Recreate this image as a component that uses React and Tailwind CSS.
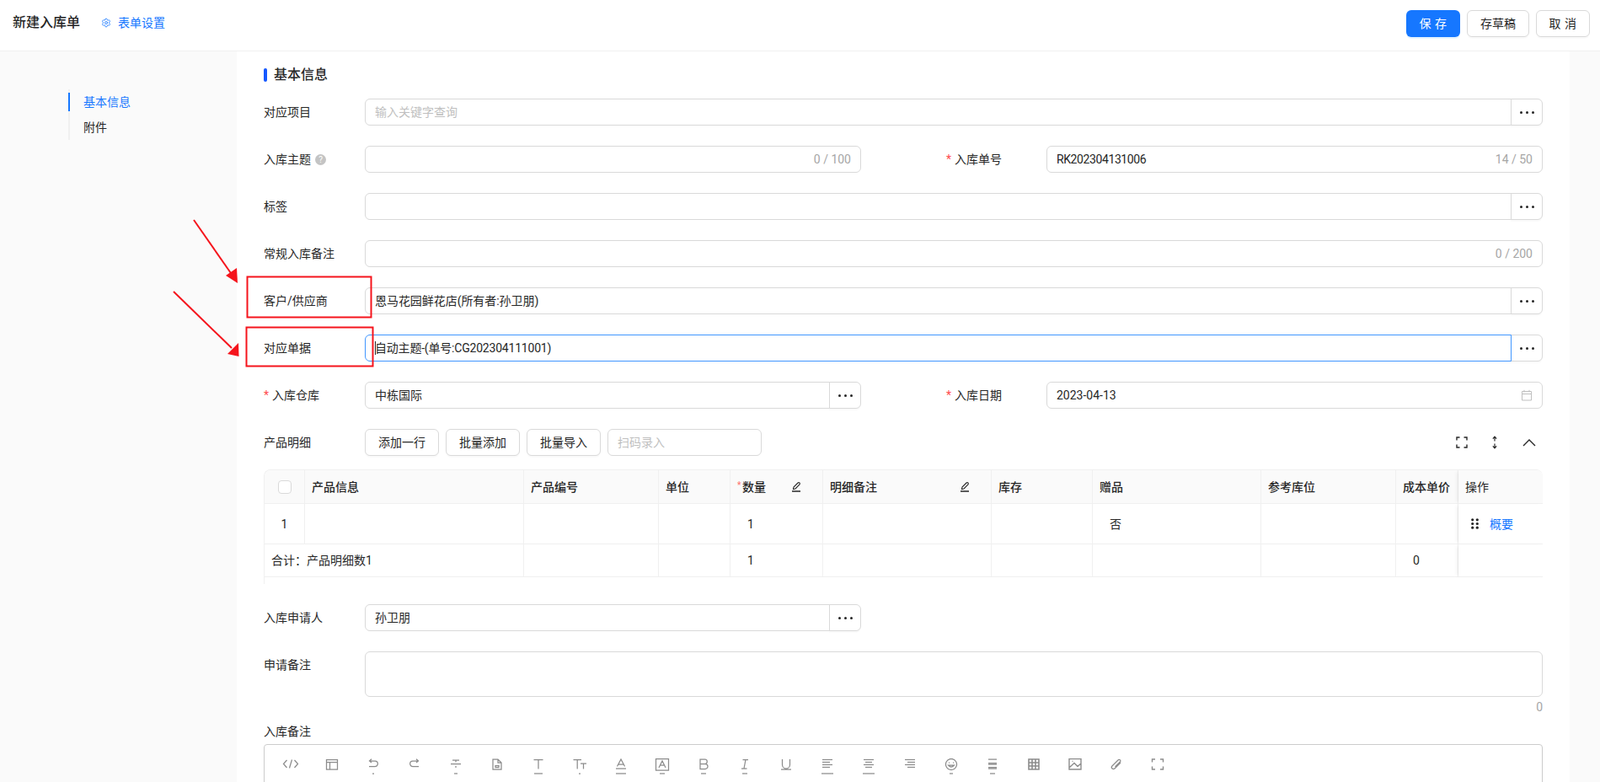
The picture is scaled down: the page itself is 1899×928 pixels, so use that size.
import React from "react";
import { Settings } from "lucide-react";

const inputBox = "h-8 border border-[#d9d9d9] rounded-md bg-white";

function Dots() {
  return (
    <span className="flex gap-1">
      <i className="w-[3px] h-[3px] bg-[#262626] rounded-full" />
      <i className="w-[3px] h-[3px] bg-[#262626] rounded-full" />
      <i className="w-[3px] h-[3px] bg-[#262626] rounded-full" />
    </span>
  );
}

function Label({ children, required, className = "" }) {
  return (
    <label className={`w-[120px] shrink-0 flex text-sm text-[#262626] ${className || "items-center"}`}>
      {required && <span className="text-[#ff4d4f] mr-[5px] w-[5px]">*</span>}
      {children}
    </label>
  );
}

function TextInput({ value, placeholder, count, inputClass = "" }) {
  return (
    <div className={`${inputBox} flex-1 min-w-0 flex items-center px-[11px]`}>
      <input
        readOnly
        value={value || ""}
        placeholder={placeholder}
        className={`flex-1 min-w-0 text-sm text-[#262626] outline-none placeholder:text-[#bfbfbf] ${inputClass}`}
      />
      {count && <span className="text-sm text-[#a6a6a6] ml-2">{count}</span>}
    </div>
  );
}

// input with the "..." picker button stuck on the right
function PickerInput({ value, placeholder, focused, inputClass = "" }) {
  return (
    <div className="flex flex-1 min-w-0">
      <div
        className={`relative flex-1 min-w-0 h-8 flex items-center px-[11px] border rounded-l-md ${
          focused ? "border-[#4096ff]" : "border-[#d9d9d9]"
        }`}
      >
        <input
          readOnly
          value={value || ""}
          placeholder={placeholder}
          className={`w-full text-sm text-[#262626] outline-none placeholder:text-[#bfbfbf] ${inputClass}`}
        />
        {focused && <i className="absolute left-[11px] top-[7px] w-px h-4 bg-[#262626]" />}
      </div>
      <button className="w-[38px] h-8 -ml-px flex items-center justify-center border border-[#d9d9d9] rounded-r-md bg-white shadow-[0_2px_0_rgba(0,0,0,0.02)]">
        <Dots />
      </button>
    </div>
  );
}

function Pencil() {
  return (
    <svg width="16" height="16" viewBox="0 0 16 16" fill="none" stroke="#262626" strokeWidth="1.1">
      <path d="M4.5 10.5 L5 8 L10 3 Q11 2.3 12 3 Q12.8 4 12 5 L7 10 Z" />
      <path d="M3 13 H13" strokeWidth="1.3" />
    </svg>
  );
}

function Toolbar() {
  return (
    <div className="flex items-center h-8 mb-4">
      <Label>产品明细</Label>
      <div className="flex gap-2 items-center">
        {["添加一行", "批量添加", "批量导入"].map((t) => (
          <button
            key={t}
            className="w-[88px] h-8 text-sm text-[#262626] border border-[#d9d9d9] rounded-md bg-white shadow-[0_2px_0_rgba(0,0,0,0.02)]"
          >
            {t}
          </button>
        ))}
        <div className={`${inputBox} w-[183px] flex items-center px-[11px]`}>
          <input placeholder="扫码录入" readOnly className="w-full text-sm outline-none placeholder:text-[#bfbfbf]" />
        </div>
      </div>
      <div className="ml-auto flex items-center text-[#262626]">
        <svg width="14" height="14" viewBox="0 0 14 14" fill="none" stroke="currentColor" strokeWidth="1.4">
          <path d="M1 4.5 V1 H4.5 M9.5 1 H13 V4.5 M13 9.5 V13 H9.5 M4.5 13 H1 V9.5" />
        </svg>
        <svg className="ml-[25px]" width="14" height="16" viewBox="0 0 14 16" fill="none" stroke="currentColor" strokeWidth="1.2">
          <path d="M7 1.5 V6.5 M4.8 3.6 L7 1.2 L9.2 3.6 M7 9.5 V14.5 M4.8 12.4 L7 14.8 L9.2 12.4" />
        </svg>
        <svg className="ml-[26px] mr-2" width="16" height="9" viewBox="0 0 16 9" fill="none" stroke="currentColor" strokeWidth="1.4">
          <path d="M1 8 L8 1 L15 8" />
        </svg>
      </div>
    </div>
  );
}

const th = "h-10 px-2 text-left text-sm font-medium text-[#262626] bg-[#fafafa] border-r border-b border-[#f0f0f0]";
const td = "px-[20px] text-sm text-[#262626] border-r border-b border-[#f0f0f0]";
const fixedCol = "shadow-[-4px_0_4px_-2px_rgba(0,0,0,0.06)]";

function DetailTable() {
  return (
    <div className="h-[136px] mb-6 border-l border-t border-[#f0f0f0] rounded-t-lg overflow-hidden">
      <table className="table-fixed w-[1517px] border-separate border-spacing-0">
        <colgroup>
          <col className="w-[48px]" />
          <col className="w-[260px]" />
          <col className="w-[160px]" />
          <col className="w-[85px]" />
          <col className="w-[110px]" />
          <col className="w-[200px]" />
          <col className="w-[120px]" />
          <col className="w-[200px]" />
          <col className="w-[160px]" />
          <col className="w-[74px]" />
          <col className="w-[100px]" />
        </colgroup>
        <thead>
          <tr>
            <th className={th}>
              <span className="block w-4 h-4 mx-auto border border-[#d9d9d9] rounded bg-white" />
            </th>
            <th className={th}>产品信息</th>
            <th className={th}>产品编号</th>
            <th className={th}>单位</th>
            <th className={th}>
              <div className="flex items-center justify-between pr-[15px]">
                <span className="relative">
                  <span className="absolute left-0 top-[1px] text-[10px] text-[#ff7875]">*</span>
                  <span className="pl-[6px]">数量</span>
                </span>
                <Pencil />
              </div>
            </th>
            <th className={th}>
              <div className="flex items-center justify-between pr-[15px]">
                明细备注
                <Pencil />
              </div>
            </th>
            <th className={th}>库存</th>
            <th className={th}>赠品</th>
            <th className={th}>参考库位</th>
            <th className={`${th} whitespace-nowrap overflow-hidden`}>成本单价</th>
            <th className={`${th} font-normal border-r-0 ${fixedCol}`}>操作</th>
          </tr>
        </thead>
        <tbody>
          <tr className="h-12">
            <td className="text-center text-sm text-[#262626] border-r border-b border-[#f0f0f0]">1</td>
            <td className={td} />
            <td className={td} />
            <td className={td} />
            <td className={td}>1</td>
            <td className={td} />
            <td className={td} />
            <td className={td}>否</td>
            <td className={td} />
            <td className={td} />
            <td className={`border-b border-[#f0f0f0] pl-[15px] ${fixedCol}`}>
              <div className="flex items-center gap-[13px]">
                <svg width="9" height="13" viewBox="0 0 9 13" fill="#262626">
                  <circle cx="1.7" cy="1.8" r="1.6" />
                  <circle cx="7.3" cy="1.8" r="1.6" />
                  <circle cx="1.7" cy="6.5" r="1.6" />
                  <circle cx="7.3" cy="6.5" r="1.6" />
                  <circle cx="1.7" cy="11.2" r="1.6" />
                  <circle cx="7.3" cy="11.2" r="1.6" />
                </svg>
                <a className="text-sm text-[#1677ff]">概要</a>
              </div>
            </td>
          </tr>
          <tr className="h-[39px]">
            <td colSpan={2} className="pl-2 text-sm text-[#262626] border-r border-b border-[#f0f0f0]">
              合计：产品明细数1
            </td>
            <td className={td} />
            <td className={td} />
            <td className={td}>1</td>
            <td className={td} />
            <td className={td} />
            <td className={td} />
            <td className={td} />
            <td className={td}>0</td>
            <td className={`border-b border-[#f0f0f0] ${fixedCol}`} />
          </tr>
        </tbody>
      </table>
    </div>
  );
}

// editor toolbar: sprite style icons, with the next sprite row peeking out below
const lines = (rows) => rows.map(([a, b], i) => <path key={i} d={`M${a} ${1.5 + i * 3} H${b}`} />);
const editorIcons = [
  { d: "M5.5 2 L1.5 6.5 L5.5 11 M14.5 2 L18.5 6.5 L14.5 11 M11.5 1.5 L8.5 11.5" },
  { d: "M3.5 1.5 H16.5 V13 H3.5 Z M3.5 4.5 H16.5 M7.5 4.5 V13" },
  { d: "M8 .8 L5.5 3 L8 5 M5.5 3 H12 A3.3 3.3 0 0 1 12 9.7 H5", bit: [9, 11] },
  { d: "M12 .8 L14.5 3 L12 5 M14.5 3 H8 A3.3 3.3 0 0 0 8 9.7 H15" },
  { d: "M6 2 H14 M10 2 V4.5 M4 6.5 H16 M10 9 V11", bit: [8, 12] },
  { d: "M5 1 H11 L15 5 V13 H5 Z M11 1 V5 H15 M8 8.5 H12 V10.5 H8 Z" },
  { d: "M4.5 1.5 H15.5 M10 1.5 V12.5", bit: [5, 15] },
  { d: "M2.5 1.5 H12 M7.2 1.5 V12.5 M11 6 H18 M14.5 6 V12.5", bit: [9, 11] },
  { d: "M5.5 9.5 L10 1 L14.5 9.5 M7 7 H13 M4 12 H16", bit: [4, 16] },
  { d: "M2.5 .5 H17.5 V14 H2.5 Z M6 11 L10 3 L14 11 M7.5 8 H12.5", bit: [7, 13] },
  { d: "M6 1 H12 A2.8 2.8 0 0 1 12 6.5 H6 Z M12 6.5 A3 3 0 0 1 12 12.5 H6 V6.5", bit: [7, 13] },
  { d: "M7.5 1.5 H14 M6 12 H12.5 M11 1.5 L9 12", bit: [7, 13] },
  { d: "M5.5 1 V7.5 A4.5 4.5 0 0 0 14.5 7.5 V1 M4 13 H16" },
  { kids: lines([[4, 16], [4, 13], [4, 16], [4, 13]]), bit: [3, 17] },
  { kids: lines([[4, 16], [6, 14], [4, 16], [6, 14]]), bit: [3, 17] },
  { kids: lines([[4, 16], [7, 16], [4, 16], [7, 16]]) },
  { d: "M10 .5 A6.5 6.5 0 1 1 9.99 .5 M7 5 H8 M12 5 H13 M6.5 8 Q10 12 13.5 8 Z", bit: [8, 12] },
  { d: "M5 1 H15 M5 5.5 H15 M5 7 H15 M5 10.5 H15 M5 12 H15", bit: [7, 13] },
  { d: "M4 1 H16 V13 H4 Z M4 5 H16 M4 9 H16 M8 1 V13 M12 1 V13", strokeWidth: 1.6 },
  { d: "M3 .5 H17 V13 H3 Z M3 11 L9 5.5 L13 9.5 L17 6 M6.5 3.5 H7.5", strokeWidth: 1.4 },
  { d: "M15 5 L8 12 A2 2 0 0 1 5 9 L12 2 A1.4 1.4 0 0 1 14.5 4 L8.5 10" },
  { d: "M3.5 4.5 V1 H7 M13 1 H16.5 V4.5 M16.5 9.5 V13 H13 M7 13 H3.5 V9.5", strokeWidth: 1.4 },
];

function EditorToolbar() {
  return (
    <div className="flex pt-4 pl-[6px]">
      {editorIcons.map((ic, i) => (
        <div key={i} className="w-[49px] shrink-0 flex justify-center">
          <svg width="20" height="20" viewBox="0 0 20 20" fill="none" stroke="#8c8c8c" strokeWidth={ic.strokeWidth || 1.25}>
            {ic.d && <path d={ic.d} />}
            {ic.kids}
            {ic.bit && <path d={`M${ic.bit[0]} 18 H${ic.bit[1]}`} />}
          </svg>
        </div>
      ))}
    </div>
  );
}

function Annotations() {
  return (
    <svg className="absolute left-0 top-0 pointer-events-none" width="1899" height="928" fill="none">
      <rect x="293.5" y="328.5" width="147" height="48" stroke="#f5141c" strokeWidth="2" />
      <rect x="292.5" y="388.5" width="150" height="46" stroke="#f5141c" strokeWidth="2" />
      <path d="M230 261 L276 327" stroke="#f5141c" strokeWidth="2" />
      <path d="M282 336 L268 327 L281 318 Z" fill="#f5141c" />
      <path d="M206 346 L275 413" stroke="#f5141c" strokeWidth="2" />
      <path d="M283.5 423 L270 420 L283 407 Z" fill="#f5141c" />
    </svg>
  );
}

export default function App() {
  return (
    <div className="relative h-[928px] overflow-hidden bg-white font-['Roboto','Noto_Sans_CJK_SC',sans-serif]">
      {/* Header */}
      <header className="h-[61px] border-b border-[#f0f0f0] flex items-center pl-[15px] pr-3 pb-[7px]">
        <h1 className="text-base font-medium text-[#262626]">新建入库单</h1>
        <a className="ml-[25px] flex items-center gap-2 text-sm text-[#1677ff]">
          <Settings size={12} strokeWidth={1.6} />
          表单设置
        </a>
        <div className="ml-auto flex gap-2 pt-[3px]">
          <button className="w-16 h-8 rounded-md bg-[#1677ff] text-white text-sm tracking-[0.5px] shadow-[0_2px_0_rgba(5,145,255,0.1)]">
            保 存
          </button>
          <button className="w-[74px] h-8 rounded-md border border-[#d9d9d9] text-sm text-[#262626] shadow-[0_2px_0_rgba(0,0,0,0.02)]">
            存草稿
          </button>
          <button className="w-16 h-8 rounded-md border border-[#d9d9d9] text-sm text-[#262626] tracking-[0.5px] shadow-[0_2px_0_rgba(0,0,0,0.02)]">
            取 消
          </button>
        </div>
      </header>

      <div className="flex h-[867px]">
        {/* Anchor nav */}
        <aside className="w-[281px] shrink-0 bg-[#fafafa] pt-[45px] pl-[81px]">
          <nav className="border-l-2 border-[#f0f0f0] text-sm">
            <div className="relative h-[30px] flex items-center pl-4 text-[#1677ff]">
              <i className="absolute -left-[2px] top-1 w-[2px] h-[22px] bg-[#1677ff]" />
              基本信息
            </div>
            <div className="h-[30px] flex items-center pl-4 text-[#262626]">附件</div>
          </nav>
        </aside>

        {/* Form */}
        <main className="flex-1 min-w-0 pt-5 pl-8 pr-8 overflow-hidden">
          <h2 className="h-4 mb-5 flex items-center text-base font-medium text-[#262626]">
            <i className="w-1 h-4 mr-2 rounded-sm bg-[#1558ff]" />
            基本信息
          </h2>

          <div className="flex h-8 mb-6">
            <Label>对应项目</Label>
            <PickerInput placeholder="输入关键字查询" />
          </div>

          <div className="flex h-8 mb-6">
            <div className="flex w-[709px]">
              <Label>
                入库主题
                <span className="ml-[5px] w-[13px] h-[13px] rounded-full bg-[#c4c4c4] text-white text-[10px] leading-[13px] text-center">?</span>
              </Label>
              <TextInput count="0 / 100" />
            </div>
            <div className="flex flex-1 ml-[101px]">
              <Label required className="items-center -mr-px">入库单号</Label>
              <TextInput value="RK202304131006" count="14 / 50" inputClass="tracking-[-0.4px]" />
            </div>
          </div>

          <div className="flex h-8 mb-6">
            <Label>标签</Label>
            <PickerInput />
          </div>

          <div className="flex h-8 mb-6">
            <Label>常规入库备注</Label>
            <TextInput count="0 / 200" />
          </div>

          <div className="flex h-8 mb-6">
            <Label>客户/供应商</Label>
            <PickerInput value="恩马花园鲜花店(所有者:孙卫朋)" inputClass="tracking-[-0.05px]" />
          </div>

          <div className="flex h-8 mb-6">
            <Label>对应单据</Label>
            <PickerInput focused value="自动主题-(单号:CG202304111001)" inputClass="tracking-[-0.2px]" />
          </div>

          <div className="flex h-8 mb-6">
            <div className="flex w-[709px]">
              <Label required>入库仓库</Label>
              <PickerInput value="中栋国际" />
            </div>
            <div className="flex flex-1 ml-[101px]">
              <Label required className="items-center -mr-px">入库日期</Label>
              <div className={`${inputBox} flex-1 flex items-center justify-between px-[11px]`}>
                <span className="text-sm text-[#262626]">2023-04-13</span>
                <svg width="14" height="14" viewBox="0 0 14 14" fill="none" stroke="#bfbfbf" strokeWidth="1">
                  <path d="M1.5 2.5 H12.5 V13 H1.5 Z M1.5 5.5 H12.5 M4 .8 V3.5 M10 .8 V3.5" />
                </svg>
              </div>
            </div>
          </div>

          <Toolbar />
          <DetailTable />

          <div className="flex w-[709px] h-8 mb-6">
            <Label>入库申请人</Label>
            <PickerInput value="孙卫朋" />
          </div>

          <div className="flex">
            <Label className="items-start pt-[6px]">申请备注</Label>
            <textarea readOnly className="flex-1 h-[54px] border border-[#d9d9d9] rounded-md resize-none outline-none" />
          </div>
          <p className="h-5 mt-[2px] text-right text-sm leading-5 text-[#a6a6a6]">0</p>

          <p className="mt-2 mb-1 h-[22px] text-sm leading-[22px] text-[#262626]">入库备注</p>
          <div className="h-[200px] border border-[#cccccc] rounded-t-sm">
            <EditorToolbar />
          </div>
        </main>

        <div className="w-9 shrink-0 bg-[#fafafa]" />
      </div>

      <Annotations />
    </div>
  );
}
